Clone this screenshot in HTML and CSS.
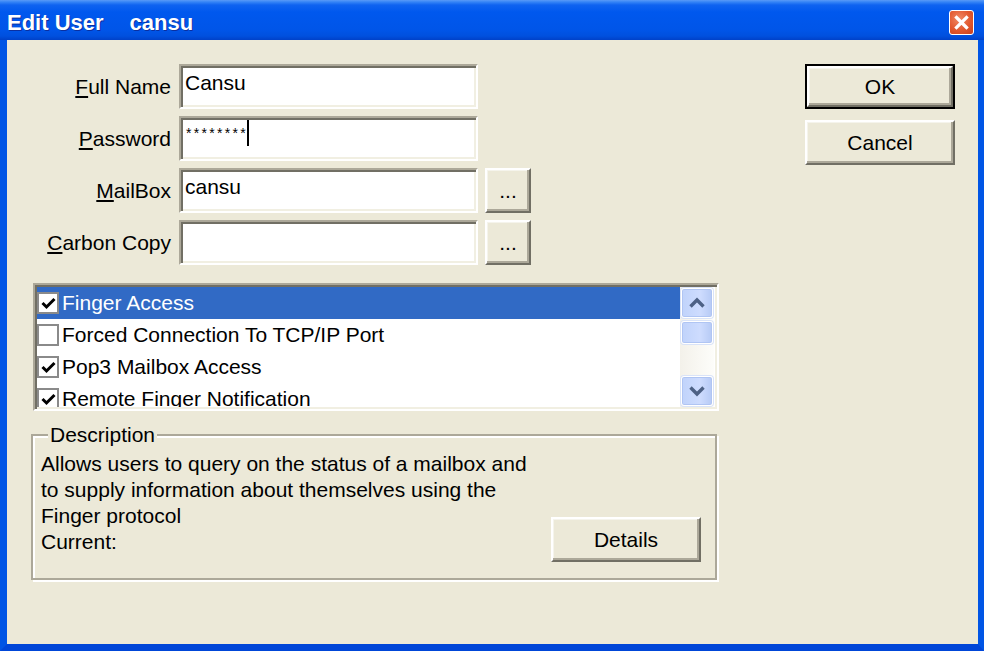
FILE: index.html
```html
<!DOCTYPE html>
<html>
<head>
<meta charset="utf-8">
<title>Edit User</title>
<link rel="stylesheet" href="styles.css">
</head>
<body>
<div class="window">
  <div class="titlebar">
    <div class="title"><span>Edit User</span><span class="title-user">cansu</span></div>
    <div class="close-btn">
      <svg width="15" height="15" viewBox="0 0 15 15"><path d="M2.5 2.5 L12.5 12.5 M12.5 2.5 L2.5 12.5" stroke="#fff" stroke-width="3.2" stroke-linecap="square"/></svg>
    </div>
  </div>
  <div class="frame">
    <div class="client">
      <div class="left-col">
        <div class="fields">
          <label class="lbl"><u>F</u>ull Name</label>
          <div class="field"><span class="field-text">Cansu</span></div>
          <div></div>

          <label class="lbl"><u>P</u>assword</label>
          <div class="field pw-field"><span class="stars">********</span><span class="caret"></span></div>
          <div></div>

          <label class="lbl"><u>M</u>ailBox</label>
          <div class="field"><span class="field-text">cansu</span></div>
          <div class="btn dots-btn">...</div>

          <label class="lbl"><u>C</u>arbon Copy</label>
          <div class="field"></div>
          <div class="btn dots-btn">...</div>
        </div>

        <div class="listbox">
          <div class="list-items">
            <div class="item selected"><span class="chk"><svg width="15" height="13" viewBox="0 0 15 13"><path d="M1.5 6 L5.5 10 L13.5 2" fill="none" stroke="#000" stroke-width="3"/></svg></span><span>Finger Access</span></div>
            <div class="item"><span class="chk"></span><span>Forced Connection To TCP/IP Port</span></div>
            <div class="item"><span class="chk"><svg width="15" height="13" viewBox="0 0 15 13"><path d="M1.5 6 L5.5 10 L13.5 2" fill="none" stroke="#000" stroke-width="3"/></svg></span><span>Pop3 Mailbox Access</span></div>
            <div class="item"><span class="chk"><svg width="15" height="13" viewBox="0 0 15 13"><path d="M1.5 6 L5.5 10 L13.5 2" fill="none" stroke="#000" stroke-width="3"/></svg></span><span>Remote Finger Notification</span></div>
          </div>
          <div class="scrollbar">
            <div class="sb-btn"><svg width="18" height="12" viewBox="0 0 18 12"><path d="M2.5 9.5 L9 3 L15.5 9.5" fill="none" stroke="#4D6185" stroke-width="3.4"/></svg></div>
            <div class="sb-thumb"></div>
            <div class="sb-track"></div>
            <div class="sb-btn"><svg width="18" height="12" viewBox="0 0 18 12"><path d="M2.5 2.5 L9 9 L15.5 2.5" fill="none" stroke="#4D6185" stroke-width="3.4"/></svg></div>
          </div>
        </div>

        <fieldset class="group">
          <legend>Description</legend>
          <div class="group-body">
            <p class="desc">Allows users to query on the status of a mailbox and<br>to supply information about themselves using the<br>Finger protocol<br>Current:</p>
            <div class="btn details-btn">Details</div>
          </div>
        </fieldset>
      </div>

      <div class="right-col">
        <div class="btn-default"><div class="btn dlg-btn">OK</div></div>
        <div class="btn dlg-btn">Cancel</div>
      </div>
    </div>
  </div>
</div>
</body>
</html>
```

FILE: styles.css
```css
* { box-sizing: border-box; }
html, body { margin: 0; padding: 0; }
body {
  width: 984px;
  height: 651px;
  overflow: hidden;
  font-family: "Liberation Sans", Arial, sans-serif;
  font-size: 21px;
  color: #000;
  background: #ECE9D8;
}
.window {
  width: 984px;
  height: 651px;
  display: flex;
  flex-direction: column;
}
.titlebar {
  height: 40px;
  flex: none;
  display: flex;
  align-items: flex-start;
  justify-content: space-between;
  padding: 0 10px 0 7px;
  background: linear-gradient(to bottom, #5A9AF7 0px, #3584F6 2px, #0F63F0 5px, #0058EE 12px, #0055E8 30px, #0050DE 36px, #0041C8 40px);
}
.title {
  color: #fff;
  font-weight: bold;
  font-size: 22px;
  line-height: 24px;
  padding-top: 11px;
  text-shadow: 1px 1px 0 #0A2FA0;
}
.title-user { margin-left: 26px; }
.close-btn {
  margin-top: 10px;
  width: 25px;
  height: 25px;
  border: 1.5px solid #fff;
  border-radius: 3px;
  background: radial-gradient(circle at 40% 35%, #F08A66 0%, #E2582E 55%, #C9401C 100%);
  display: flex;
  align-items: center;
  justify-content: center;
}
.frame {
  flex: 1;
  display: flex;
  border-left: 7px solid #0055E5;
  border-right: 6px solid #0055E5;
  border-bottom: 7px solid #0046D8;
  box-shadow: inset 2px 0 0 #0831B8, inset -2px 0 0 #0A2A9E, inset 0 -3px 0 #0A1E8C;
}
.client {
  flex: 1;
  background: #ECE9D8;
  display: grid;
  grid-template-columns: 686px 150px;
  column-gap: 86px;
  padding: 24px 23px 0 26px;
  align-items: start;
}
.left-col {
  display: flex;
  flex-direction: column;
}
.fields {
  display: grid;
  grid-template-columns: 139px 299px 46px;
  grid-auto-rows: 45px;
  column-gap: 7px;
  row-gap: 7px;
  align-items: center;
}
.lbl {
  text-align: right;
  padding-right: 1px;
  white-space: nowrap;
}
.field {
  height: 45px;
  background: #fff;
  border: 2px solid;
  border-color: #ACA899 #fff #fff #ACA899;
  box-shadow: inset 2px 2px 0 #716F64, inset -2px -2px 0 #F1EFE2;
  padding: 5px 5px 0 4px;
  line-height: 24px;
  white-space: nowrap;
}
.pw-field {
  display: flex;
  align-items: flex-start;
  padding: 0 0 0 5px;
}
.stars {
  font-size: 14px;
  line-height: 14px;
  letter-spacing: 2.3px;
  margin-top: 8px;
}
.caret {
  width: 2px;
  height: 26px;
  background: #000;
  margin-top: 2px;
  margin-left: -1px;
}
.btn {
  background: #ECE9D8;
  border: 2px solid;
  border-color: #fff #716F64 #716F64 #fff;
  box-shadow: inset -2px -2px 0 #ACA899, inset 1px 1px 0 #F5F4EC;
  display: flex;
  align-items: center;
  justify-content: center;
  line-height: 24px;
}
.dots-btn {
  height: 45px;
}
.listbox {
  margin-top: 18px;
  height: 128px;
  display: flex;
  background: #fff;
  border: 2px solid;
  border-color: #ACA899 #fff #fff #ACA899;
  box-shadow: inset 2px 2px 0 #716F64, inset -2px -2px 0 #F1EFE2;
  padding: 2px;
  overflow: hidden;
}
.list-items {
  flex: 1;
  overflow: hidden;
}
.item {
  height: 32px;
  display: flex;
  align-items: center;
  padding-left: 0;
  white-space: nowrap;
}
.item.selected {
  background: #316AC5;
  color: #fff;
}
.chk {
  width: 22px;
  height: 22px;
  border: 2px solid #8A8A8A;
  background: #fff;
  margin-right: 3px;
  display: flex;
  align-items: center;
  justify-content: center;
  flex: none;
}
.scrollbar {
  width: 34px;
  flex: none;
  display: flex;
  flex-direction: column;
  background: linear-gradient(to right, #F3F1EA, #FDFDFA);
  margin-right: 1px;
}
.sb-btn, .sb-thumb {
  border: 1px solid #fff;
  border-radius: 3px;
  background: linear-gradient(to right, #C0D3FB, #CEDCFE 60%, #B6CAF5);
  box-shadow: inset 0 0 0 1px #B0C5F3, 0 0 0 1px #D9E3F8;
  display: flex;
  align-items: center;
  justify-content: center;
  margin: 1px;
}
.sb-btn { height: 30px; }
.sb-thumb { height: 23px; margin-top: 2px; }
.sb-track { flex: 1; }
.group {
  margin: 12px 0 0 -2px;
  width: 686px;
  padding: 0;
  border: 2px solid #ACA899;
  box-shadow: inset 2px 2px 0 #fff, 2px 2px 0 #fff;
  min-width: 0;
}
.group legend {
  margin-left: 15px;
  padding: 0 2px;
  line-height: 24px;
  background: #ECE9D8;
}
.group-body {
  display: flex;
  justify-content: space-between;
  align-items: flex-end;
  padding: 4px 14px 16px 8px;
}
.desc {
  margin: 0 0 7px 0;
  line-height: 26px;
}
.details-btn {
  width: 150px;
  height: 45px;
}
.right-col {
  display: flex;
  flex-direction: column;
  gap: 11px;
}
.btn-default {
  border: 2px solid #000;
  height: 45px;
}
.dlg-btn {
  width: 150px;
  height: 45px;
}
.btn-default .dlg-btn { width: 146px; height: 41px; }
```
